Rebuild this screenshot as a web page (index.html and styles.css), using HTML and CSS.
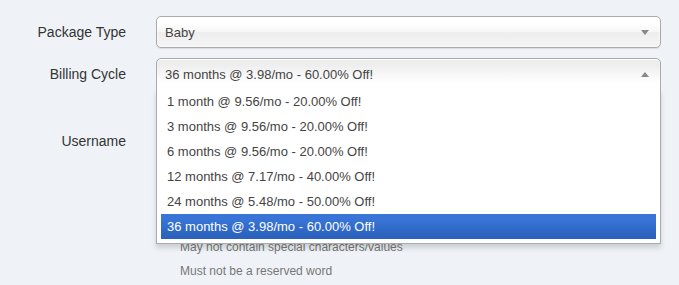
FILE: index.html
```html
<!DOCTYPE html>
<html lang="en">
<head>
  <meta charset="UTF-8" />
  <title>Order Form</title>
  <link rel="stylesheet" href="styles.css">
</head>
<body>

  <form class="order-form">
    <div class="form-row">
      <label class="form-label">Package Type</label>
      <div class="chosen">
        <div class="chosen-single">
          <span>Baby</span>
          <b class="arrow down"></b>
        </div>
      </div>
    </div>

    <div class="form-row">
      <label class="form-label">Billing Cycle</label>
      <div class="chosen with-drop">
        <div class="chosen-single">
          <span>36 months @ 3.98/mo - 60.00% Off!</span>
          <b class="arrow up"></b>
        </div>
        <!-- open dropdown -->
        <div class="chosen-drop">
          <ul class="chosen-results">
            <li>1 month @ 9.56/mo - 20.00% Off!</li>
            <li>3 months @ 9.56/mo - 20.00% Off!</li>
            <li>6 months @ 9.56/mo - 20.00% Off!</li>
            <li>12 months @ 7.17/mo - 40.00% Off!</li>
            <li>24 months @ 5.48/mo - 50.00% Off!</li>
            <li class="highlighted">36 months @ 3.98/mo - 60.00% Off!</li>
          </ul>
        </div>
      </div>
    </div>

    <div class="form-row username-row">
      <label class="form-label">Username</label>
      <div class="field">
        <input type="text" class="text-input">
        <ul class="rules">
          <li>May not contain special characters/values</li>
          <li>Must not be a reserved word</li>
        </ul>
      </div>
    </div>
  </form>

</body>
</html>
```

FILE: styles.css
```css
* {
  margin: 0;
  padding: 0;
  box-sizing: border-box;
}

html, body {
  height: 100%;
  font-family: 'Liberation Sans', Arial, Helvetica, sans-serif;
  background: #eff3f7;
  color: #333;
}

.order-form {
  padding-top: 16px;
}

.form-row {
  display: grid;
  grid-template-columns: 126px 505px;
  column-gap: 30px;
  margin-bottom: 10px;
}

.form-label {
  font-size: 14px;
  line-height: 32px;
  text-align: right;
  color: #333;
}

/* Chosen style select */
.chosen {
  position: relative;
  font-size: 13px;
  color: #444;
}

.chosen-single {
  display: flex;
  align-items: center;
  justify-content: space-between;
  height: 32px;
  padding: 0 11px 0 8px;
  border: 1px solid #aaa;
  border-radius: 5px;
  background: linear-gradient(#fff 20%, #f6f6f6 50%, #eee 52%, #f4f4f4 100%);
  box-shadow: 0 0 3px #fff inset, 0 1px 1px rgba(0,0,0,0.1);
}

.with-drop .chosen-single {
  border-bottom-left-radius: 0;
  border-bottom-right-radius: 0;
  background: linear-gradient(#eee 20%, #fff 80%);
  box-shadow: 0 1px 0 #fff inset;
}

.arrow {
  width: 0;
  height: 0;
  border-left: 4px solid transparent;
  border-right: 4px solid transparent;
}

.arrow.down {
  border-top: 5px solid #888;
}

.arrow.up {
  border-bottom: 5px solid #888;
}

.chosen-drop {
  position: absolute;
  top: 100%;
  left: 0;
  right: 0;
  margin-top: -1px;
  z-index: 10;
  background: #fff;
  border: 1px solid #aaa;
  border-top: 0;
  box-shadow: 0 4px 5px rgba(0,0,0,0.15);
}

.chosen-results {
  list-style: none;
  margin: 0 4px 4px 0;
  padding: 0 0 0 4px;
}

.chosen-results li {
  padding: 5px 6px;
  line-height: 15px;
}

.chosen-results li.highlighted {
  color: #fff;
  background: linear-gradient(#3875d7 20%, #2a62bc 90%);
}

/* Username */
.username-row {
  margin-top: 35px;
}

.text-input {
  display: block;
  width: 100%;
  height: 32px;
  border: 1px solid #ccc;
  border-radius: 4px;
  background: #fff;
}

.rules {
  margin-top: 78px;
  padding-left: 24px;
  list-style: none;
  font-size: 12px;
  color: #777;
}

.rules li {
  line-height: 24px;
}
```
